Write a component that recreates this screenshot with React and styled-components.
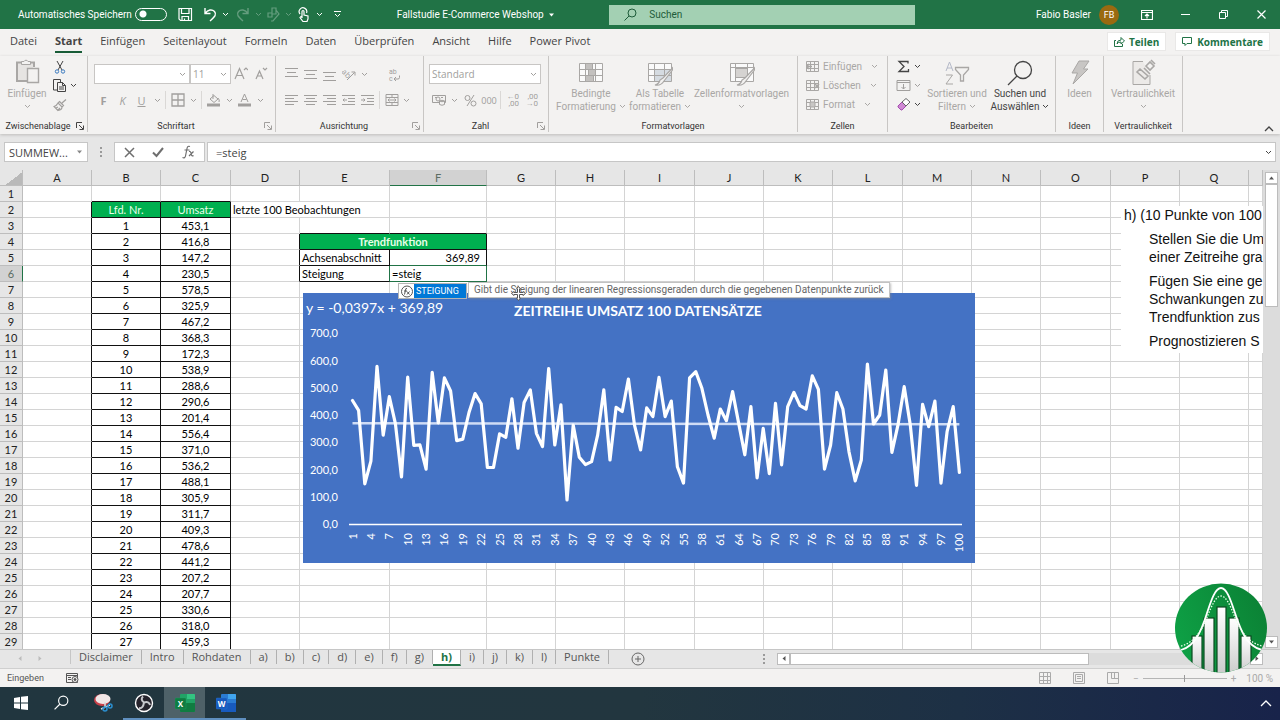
import React from 'react';
import styled, { createGlobalStyle } from 'styled-components';

const ui = `'Open Sans', 'Noto Sans', sans-serif`;
const small = `Roboto, 'Open Sans', sans-serif`;
const cellFont = `Lato, 'Open Sans', sans-serif`;

const GlobalStyle = createGlobalStyle`
  * {
    box-sizing: border-box;
  }

  body {
    margin: 0;
    font-family: ${ui};
    font-size: 11px;
    color: #444;
    background: #e6e6e6;
  }

  button, input, select {
    font: inherit;
    color: inherit;
    margin: 0;
    padding: 0;
    border: none;
    background: none;
    border-radius: 0;
    outline: none;
  }

  svg {
    display: block;
    flex: none;
  }
`;

const Window = styled.div`
  display: flex;
  flex-direction: column;
  height: 100vh;
  overflow: hidden;
`;

/* title bar */

const TitleBar = styled.header`
  display: grid;
  grid-template-columns: 31% 16.6% 23.9% 1fr;
  align-items: center;
  height: 29px;
  flex: none;
  background: #217346;
  color: #fff;
  font-family: ${small};
  font-size: 11px;
`;

const QuickAccess = styled.div`
  display: flex;
  align-items: center;
  padding-left: 18px;
`;

const AutoSave = styled.label`
  display: flex;
  align-items: center;
  gap: 3px;
  margin-right: 6px;
  font-size: 10px;
`;

const Toggle = styled.input`
  appearance: none;
  width: 32px;
  height: 13px;
  border: 1px solid #fff;
  border-radius: 7px;
  background: radial-gradient(circle at 7px 5px, #fff 3px, transparent 4px);
`;

const BarButton = styled.button`
  display: flex;
  align-items: center;
  justify-content: center;
  width: ${props => props.$width || 24}px;
  height: 24px;
  opacity: ${props => (props.$faded ? 0.3 : 1)};
`;

const DocTitle = styled.div`
  display: flex;
  align-items: center;
  gap: 4px;
  font-size: 10px;
  white-space: nowrap;
`;

const SearchBox = styled.label`
  display: flex;
  align-items: center;
  gap: 12px;
  height: 20px;
  padding-left: 15px;
  background: #a3d0b3;
  color: #1e5c3a;

  input {
    flex: 1;
    min-width: 0;
    font-size: 10px;
  }

  input::placeholder {
    color: #1e5c3a;
    opacity: 1;
  }
`;

const Account = styled.div`
  display: flex;
  align-items: center;
  justify-content: flex-end;
  font-size: 10px;
`;

const Avatar = styled.span`
  width: 20px;
  height: 20px;
  margin: 0 9px 0 8px;
  border-radius: 50%;
  background: #9a6a10;
  font-size: 9px;
  line-height: 20px;
  text-align: center;
`;

/* ribbon */

const TabRow = styled.nav`
  display: flex;
  align-items: flex-start;
  gap: 18px;
  height: 27px;
  flex: none;
  padding: 0 10px;
  background: #f3f2f1;
`;

const RibbonTab = styled.a`
  position: relative;
  line-height: 24px;
  color: #444;
  text-decoration: none;
  white-space: nowrap;
  font-weight: ${props => (props.$active ? 700 : 400)};

  &::after {
    content: '';
    position: absolute;
    left: 0;
    right: 0;
    bottom: 0;
    height: ${props => (props.$active ? 2 : 0)}px;
    background: #185c37;
  }
`;

const ShareButtons = styled.div`
  display: flex;
  gap: 9px;
  margin: 3px 0 0 auto;
`;

const ShareButton = styled.button`
  display: flex;
  align-items: center;
  gap: 4px;
  height: 19px;
  padding: 0 6px;
  background: #fff;
  border: 1px solid #e9e8e7;
  color: #217346;
  font-size: 10px;
  font-weight: 700;
`;

const Ribbon = styled.div`
  display: flex;
  height: 78px;
  flex: none;
  background: #f3f2f1;
  box-shadow: 0 1px 3px #bdbcbb;
  position: relative;
`;

const Group = styled.section`
  display: flex;
  flex-direction: column;
  flex: none;
  width: ${props => props.$width}px;
  padding-top: 1px;
  border-right: 1px solid #c8c6c4;
  margin-bottom: 2px;
`;

const GroupBody = styled.div`
  display: flex;
  flex: 1;
  padding-left: ${props => props.$pad || 0}px;
  justify-content: ${props => (props.$center ? 'center' : 'flex-start')};
`;

const GroupCaption = styled.div`
  display: flex;
  align-items: center;
  height: 12px;
  font-family: ${small};
  font-size: 9px;
  color: #333;

  span {
    flex: 1;
    text-align: center;
  }

  svg {
    margin-right: 3px;
    color: ${props => (props.$on ? '#444' : '#a19f9d')};
  }
`;

const Column = styled.div`
  display: flex;
  flex-direction: column;
`;

const TwoRows = styled.div`
  display: grid;
  grid-template-rows: 20px 20px;
  row-gap: 6px;
  align-content: start;
  padding-top: 7px;
`;

const ToolRow = styled.div`
  display: flex;
  align-items: center;
`;

const Tool = styled.button`
  display: flex;
  align-items: center;
  justify-content: center;
  width: ${props => props.$width || 19}px;
  height: 19px;
  margin-left: ${props => props.$gap || 0}px;
  color: ${props => (props.$on ? '#444' : '#a19f9d')};
`;

const LabelTool = styled.button`
  display: flex;
  align-items: center;
  gap: 3px;
  height: 19px;
  color: #a9a7a5;
  font-family: ${small};
  font-size: 10px;

  svg:last-child {
    margin-left: 6px;
  }
`;

const Separator = styled.span`
  width: 1px;
  height: 18px;
  margin: 0 2px;
  background: #dad8d6;
`;

const Combo = styled.label`
  display: flex;
  align-items: center;
  width: ${props => props.$width}px;
  height: 20px;
  padding: 0 3px 0 2px;
  background: #fff;
  border: 1px solid #c8c6c4;
  color: #a19f9d;
  font-size: 10px;

  select {
    appearance: none;
    flex: 1;
    min-width: 0;
  }
`;

const BigTool = styled.button`
  display: flex;
  flex-direction: column;
  align-items: center;
  width: ${props => props.$width}px;
  padding-top: 2px;
  color: ${props => (props.$on ? '#444' : '#a9a7a5')};
  font-family: ${small};
  font-size: 10px;
  line-height: 13px;
  white-space: nowrap;

  span {
    display: flex;
    align-items: center;
    gap: 3px;
    min-height: 13px;
  }

  > svg:last-child {
    margin-top: 4px;
  }
`;

const Collapse = styled.button`
  margin: auto 6px 0 auto;
  padding-bottom: 2px;
`;

/* formula bar */

const FormulaBar = styled.div`
  display: flex;
  align-items: center;
  height: 36px;
  flex: none;
  padding: 0 4px;
`;

const NameBox = styled.label`
  display: flex;
  align-items: center;
  width: 84px;
  height: 20px;
  padding: 0 3px 0 4px;
  background: #fff;
  border: 1px solid #c6c6c6;

  input {
    flex: 1;
    min-width: 0;
    font-size: 11px;
  }

  svg {
    color: #888;
  }
`;

const Grip = styled.span`
  width: 2px;
  height: 11px;
  margin: 0 12px;
  background: repeating-linear-gradient(#9a9a9a 0 2px, transparent 2px 4px);
`;

const FormulaButtons = styled.div`
  display: flex;
  justify-content: space-around;
  align-items: center;
  width: 91px;
  height: 20px;
  background: #fff;
  border: 1px solid #c6c6c6;
  margin-right: 2px;
  color: #6e6e6e;
`;

const FormulaField = styled.label`
  display: flex;
  align-items: center;
  flex: 1;
  height: 20px;
  padding: 0 3px 0 8px;
  background: #fff;
  border: 1px solid #c6c6c6;

  input {
    flex: 1;
    font-size: 11px;
  }
`;

/* sheet */

const SheetArea = styled.main`
  display: flex;
  flex: 1;
  min-height: 0;
`;

const Canvas = styled.div`
  position: relative;
  flex: 1;
  min-width: 0;
  overflow: hidden;
  background: #fff;
`;

const Grid = styled.table`
  table-layout: fixed;
  border-collapse: separate;
  border-spacing: 0;
  width: max-content;
  min-width: 100%;
  font-family: ${cellFont};
  font-size: 11px;
  line-height: 15px;
  color: #000;
`;

const HeadCell = styled.th`
  height: 16px;
  padding: 1px 0 0;
  font-weight: 400;
  line-height: 14px;
  color: ${props => (props.$active ? '#5c6e64' : '#222')};
  background: ${props => (props.$active ? '#d2d2d2' : '#e6e6e6')};
  border-right: 1px solid ${props => (props.$active && props.scope === 'row' ? '#217346' : '#bdbdbd')};
  border-bottom: 1px solid ${props => (props.$active && props.scope === 'col' ? '#217346' : '#bdbdbd')};
`;

const Corner = styled.td`
  height: 16px;
  padding: 0;
  background: linear-gradient(143deg, #e6e6e6 60%, #b9b9b9 60%);
  border-right: 1px solid #bdbdbd;
  border-bottom: 1px solid #bdbdbd;
`;

const Cell = styled.td`
  height: 16px;
  padding: 0 ${props => (props.$align === 'right' ? 6 : 2)}px;
  overflow: hidden;
  white-space: nowrap;
  text-align: ${props => props.$align || 'left'};
  color: ${props => (props.$head ? '#e9ffe9' : '#000')};
  font-weight: ${props => (props.$bold ? 700 : 400)};
  background: ${props => (props.$head ? '#00b050' : 'transparent')};
  border-right: 1px solid ${props => props.$right || '#d4d4d4'};
  border-bottom: 1px solid ${props => props.$bottom || '#d4d4d4'};

  input {
    display: block;
    width: 100%;
    height: 15px;
  }
`;

const Chart = styled.svg`
  position: absolute;
  left: 303px;
  top: 123px;
  font-family: ${cellFont};
  font-size: 11px;
  fill: #fff;
`;

const TaskText = styled.div`
  position: absolute;
  left: 1121px;
  right: 0;
  top: 36px;
  padding: 0 0 3px 3px;
  background: #fff;
  color: #111;
  font-family: 'Liberation Sans', Arial, sans-serif;
  font-size: 14px;
  line-height: 18px;
  white-space: nowrap;

  p {
    margin: 0 0 6px;
  }

  p + p {
    margin-left: 25px;
  }

  p:last-child {
    margin-bottom: 0;
  }
`;

const Suggestions = styled.ul`
  position: absolute;
  left: 398px;
  top: 113px;
  width: 69px;
  margin: 0;
  padding: 0;
  list-style: none;
  background: #fff;
  border: 1px solid #b5b5b5;

  li {
    display: flex;
    align-items: center;
    height: 14px;
    font-family: ${small};
    font-size: 9px;
    color: #fff;
  }

  span {
    flex: 1;
    padding-left: 2px;
    background: #0078d7;
    line-height: 14px;
  }
`;

const Tooltip = styled.div`
  position: absolute;
  left: 468px;
  top: 112px;
  padding: 0 5px;
  background: #fff;
  border: 1px solid #c2c2c2;
  box-shadow: 1px 1px 2px #8888;
  color: #666;
  font-family: ${small};
  font-size: 10px;
  line-height: 14px;
  white-space: nowrap;
`;

const MoveCursor = styled.svg`
  position: absolute;
  left: 511px;
  top: 116px;
`;

const VScroll = styled.div`
  display: flex;
  flex-direction: column;
  width: 17px;
  padding: 2px 2px 1px;
  background: #dcdcdc;
`;

const ScrollButton = styled.button`
  display: flex;
  align-items: center;
  justify-content: center;
  width: 13px;
  height: 12px;
  background: #fff;
  border: 1px solid #bcbcbc;
  color: #555;
`;

const VThumb = styled.div`
  height: 123px;
  margin-bottom: auto;
  background: #fff;
  border: 1px solid #bcbcbc;
`;

/* sheet tabs and status */

const SheetTabs = styled.div`
  display: flex;
  align-items: flex-start;
  height: 20px;
  flex: none;
  border-top: 1px solid #c6c6c6;
  border-bottom: 1px solid #cfcfcf;
`;

const TabArrows = styled.div`
  display: flex;
  gap: 12px;
  width: 71px;
  height: 14px;
  padding: 5px 0 0 16px;
  border-right: 1px solid #c6c6c6;
  color: #bcbcbc;
`;

const SheetTab = styled.a`
  height: ${props => (props.$active ? 16 : 14)}px;
  padding: 0 8px;
  line-height: 14px;
  text-decoration: none;
  color: ${props => (props.$active ? '#217346' : '#555')};
  font-weight: ${props => (props.$active ? 700 : 400)};
  background: ${props => (props.$active ? '#fff' : 'transparent')};
  border-right: 1px solid #b0b0b0;
  border-bottom: ${props => (props.$active ? '2px solid #217346' : 'none')};
`;

const AddSheet = styled.button`
  margin: 2px 0 0 22px;
  color: #666;
`;

const HScroll = styled.div`
  display: flex;
  align-items: center;
  width: 40%;
  margin: 3px 17px 0 auto;
`;

const HTrack = styled.div`
  display: flex;
  flex: 1;
  height: 12px;
  background: #dcdcdc;
`;

const HThumb = styled.div`
  width: 65%;
  height: 12px;
  background: #fff;
  border: 1px solid #bcbcbc;
`;

const StatusBar = styled.footer`
  display: flex;
  align-items: center;
  gap: 22px;
  height: 18px;
  flex: none;
  padding: 0 7px;
  background: #f3f2f1;
  font-family: ${small};
  font-size: 9px;
  color: #555;
`;

const ViewTools = styled.div`
  display: flex;
  align-items: center;
  gap: 22px;
  margin-left: auto;
  color: #aaa;
`;

const Zoom = styled.label`
  display: flex;
  align-items: center;
  gap: 4px;
  margin-left: -8px;
  font-size: 10px;

  input {
    appearance: none;
    width: 84px;
    height: 10px;
    background: linear-gradient(#b5b5b5, #b5b5b5) center / 100% 1px no-repeat;
  }

  input::-webkit-slider-thumb {
    appearance: none;
    width: 1px;
    height: 7px;
    background: #999;
  }

  output {
    margin-left: 6px;
  }
`;

const Taskbar = styled.div`
  display: flex;
  height: 33px;
  flex: none;
  background: linear-gradient(90deg, #21363f 0%, #22363f 50%, #1d3045 75%, #18234a 100%);
`;

const TaskButton = styled.button`
  display: flex;
  align-items: center;
  justify-content: center;
  width: 41px;
  background: ${props => (props.$active ? '#4e6168' : 'transparent')};
  border-bottom: 2px solid ${props => (props.$open ? '#5f8fbf' : 'transparent')};
  color: #fff;
`;

const TrayButton = styled.button`
  margin: 0 8px 0 auto;
  color: #fff;
`;

const Logo = styled.svg`
  position: absolute;
  right: 11px;
  bottom: 47px;
`;

/* icons */

function Icon({ size = 16, w, h, children, ...rest }) {
  return (
    <svg
      width={w || size}
      height={h || size}
      viewBox={`0 0 ${w || size} ${h || size}`}
      fill="none"
      stroke="currentColor"
      strokeWidth="1"
      aria-hidden="true"
      {...rest}
    >
      {children}
    </svg>
  );
}

const Chevron = () => (
  <Icon w={7} h={5}><path d="M1 1l2.500 2.500L6 1" /></Icon>
);

const Launcher = () => (
  <Icon size={8}><path d="M.5 6V.5H6M3 3l4 4M7.500 3.500v4h-4" /></Icon>
);

const SaveIcon = () => (
  <Icon size={15}>
    <path d="M1 1.500h12.500v12H2.500L1 12zM3.500 1.500v5H11v-5M4 13.500v-4h6.500v4M6.500 11.500v2" strokeWidth="1.200" />
  </Icon>
);

const UndoIcon = () => (
  <Icon size={15}><path d="M2 1v5.500h5.500M2 6.500C5 2.500 9 2 11.500 4.500C14 7.500 12 9.500 7 14" strokeWidth="1.400" /></Icon>
);

const RedoIcon = () => (
  <Icon size={15}><path d="M13 1v5.500H7.500M13 6.500C10 2.500 6 2 3.500 4.500C1 7.500 3 9.500 8 14" strokeWidth="1.400" /></Icon>
);

const ShapesIcon = () => (
  <Icon size={15}><path d="M6 1h4v6H6zM10 3l3 4-6 7H5M2 6h4v4H2z" strokeWidth="1.200" /></Icon>
);

const TouchIcon = () => (
  <Icon size={15}>
    <path d="M6 11V4.500a1 1 0 0 1 2 0V8l4 1v3l-1 2.500H7L4 10.500l1-1 1 1M4 7A3.800 3.800 0 1 1 10.500 6" strokeWidth="1.200" />
  </Icon>
);

const SearchIcon = ({ size = 13 }) => (
  <svg width={size} height={size} viewBox="0 0 13 13" fill="none" stroke="currentColor" aria-hidden="true">
    <circle cx="8" cy="5" r="4" />
    <path d="M5 8l-4.500 4.500" />
  </svg>
);

const PasteIcon = () => (
  <Icon w={26} h={28}>
    <path d="M4 4h15v17H4z" fill="#e6e4e2" stroke="none" />
    <path d="M8 3.500H3v18.500h10M16 3.500h4V8" strokeWidth="2" />
    <path d="M7.500 5.500v-3H10a2.200 2.200 0 0 1 4 0h2.500v3z" fill="#f3f2f1" />
    <path d="M13.500 9.500h11v14h-11z" fill="#f3f2f1" strokeWidth="1.400" />
  </Icon>
);

const CutIcon = () => (
  <Icon size={14}>
    <path d="M4 1l5 9M10 1L5 10" />
    <circle cx="4" cy="11.500" r="1.700" stroke="#3a7abf" />
    <circle cx="10" cy="11.500" r="1.700" stroke="#3a7abf" />
  </Icon>
);

const CopyIcon = () => (
  <Icon size={15}>
    <path d="M5 12H1.500V1.500h7V4M5.500 4.500h5l3 3v6h-8zM10.500 4.500v3h3M7 9h5M7 11h5" />
  </Icon>
);

const BrushIcon = () => (
  <Icon size={14}>
    <path d="M13 1.500L9 5M6.500 3.500l4 4-1.500 1.500-4-4zM5 5C4 7 3 8 1 8.500l4 4C8 12 9 10 9 9M3 10l2-1M5 12l2-2" strokeWidth="1.200" />
  </Icon>
);

const BordersIcon = () => (
  <Icon size={14}><path d="M1 1h12v12H1zM7 1v12M1 7h12" strokeWidth="1.300" /></Icon>
);

const FillIcon = () => (
  <Icon size={14}>
    <path d="M6 1v5M3 6l4-3.500L11 6l-4 3.500zM11 5q2 2 1 4" />
    <path d="M0 10.500h13v3H0z" fill="currentColor" stroke="none" />
  </Icon>
);

const FontColorIcon = () => (
  <Icon size={14}>
    <path d="M3 9L6.500 1 10 9M4.500 6.500h4" />
    <path d="M0 10.500h13v3H0z" fill="currentColor" stroke="none" />
  </Icon>
);

// each entry of `lines` is the start and end of one stroke
function LinesIcon({ lines, step = 3, top = 1 }) {
  return (
    <Icon w={13} h={13}>
      <path d={lines.map(([a, b], i) => `M${a} ${top + i * step + 0.5}H${b}`).join('')} />
    </Icon>
  );
}

const IndentIcon = ({ flip }) => (
  <Icon size={13}>
    <path d="M0 1.500h13M6 4.500h7M6 7.500h7M0 10.500h13" />
    <path d={flip ? 'M0 6h4M2.500 4.500L4 6 2.500 7.500' : 'M5 6H1M2.500 4.500L1 6l1.500 1.500'} />
  </Icon>
);

const OrientationIcon = () => (
  <Icon size={14}>
    <path d="M5 13L12.500 5.500M9.500 5h3.500v3.500" />
    <text x="0" y="9" fontSize="8" stroke="none" fill="currentColor" transform="rotate(45 4 6)">ab</text>
  </Icon>
);

const WrapIcon = () => (
  <Icon size={15} fontFamily="Roboto, sans-serif" fontSize="7">
    <text x="2" y="7" stroke="none" fill="currentColor">ab</text>
    <text x="2" y="14" stroke="none" fill="currentColor">c</text>
    <path d="M12.500 8.500v2q0 1.500-1.500 1.500H7.500M9 10l-2 2 2 2" />
  </Icon>
);

const MergeIcon = () => (
  <Icon size={14}>
    <path d="M1 1.500h12v11H1zM1 4.500h12M1 9.500h12M7 1v3M7 10v3M3 7h8M4.500 5.500L3 7l1.500 1.500M9.500 5.500L11 7 9.500 8.500" />
  </Icon>
);

const CurrencyIcon = () => (
  <Icon size={14}>
    <path d="M.5 2.500h13v7H.5zM3 4.500h2M9 4.500h2" />
    <circle cx="6" cy="6" r="2" />
    <path d="M7.500 8v3.500q2.500 1.500 5 0V8q-2.500-1.500-5 0q2.500 1.500 5 0" fill="#f3f2f1" />
  </Icon>
);

const DecimalIcon = ({ top, bottom }) => (
  <Icon w={15} h={14} stroke="none" fill="currentColor" fontSize="8" fontFamily="Roboto, sans-serif">
    <text x="14" y="6" textAnchor="end">{top}</text>
    <text x="14" y="13" textAnchor="end">{bottom}</text>
  </Icon>
);

const TableBrushIcon = ({ variant }) => (
  <Icon w={26} h={28}>
    <path d="M1.500 4.500h23v18h-23z" fill="#fafafa" />
    {variant === 'cond' && <path d="M7.500 4.500h7v6h-7zM7.500 16.500h8v6h-8zM10.500 10.500h7v6h-7z" fill="#c3c1bf" />}
    {variant === 'table' && <path d="M8 10h16v12H8z" fill="#d5dbe1" stroke="none" />}
    {variant === 'style' && <path d="M6.500 9.500h12v9h-12z" fill="#d5d3d1" />}
    {variant === 'style'
      ? <path d="M6.500 4v18M1 8.500h23M18.500 4v12" />
      : <path d="M7.500 4v18M17.500 4v18M1 10.500h23M1 16.500h23" />}
    {variant !== 'cond' && (
      <path d="M25.500 9L16 19l-3 2q-1 4-5 5q6 1 9-4l8.500-11z" fill="#f3f2f1" strokeWidth="1.200" />
    )}
  </Icon>
);

const CellsIcon = ({ mode }) => (
  <Icon w={14} h={13}>
    <path d="M.5 1.500h12v10H.5zM.5 4.500h12M.5 8.500h12M4.500 1v11M8.500 1v11" />
    {mode === 'insert' && <path d="M6 6.500H0M3 4L.5 6.500 3 9" strokeWidth="1.500" />}
    {mode === 'delete' && <path d="M9 5l4 4M13 5L9 9" strokeWidth="1.500" />}
    {mode === 'format' && <path d="M4 4h5v5H4z" fill="#c9c7c5" />}
  </Icon>
);

const SumIcon = () => (
  <Icon size={13}><path d="M11 3.500V1.500H2L7 6.500 2 11.500h9.500V9" strokeWidth="1.300" /></Icon>
);

const FillDownIcon = () => (
  <Icon w={15} h={13}><path d="M1 1.500h13v10H1zM1 3.500h13M7.500 5v5M5.500 8l2 2 2-2" /></Icon>
);

const EraserIcon = () => (
  <Icon w={14} h={13}>
    <path d="M1 8l4-4 4 4-4 4H4L1 9z" fill="#cf8ad4" stroke="#a54ab0" />
    <path d="M5 4l4-3.500L13 4 9 8z" fill="#fff" stroke="#666" />
  </Icon>
);

const SortIcon = () => (
  <Icon w={26} h={28}>
    <path d="M2 12L5.500 3 9 12M3 9h5" stroke="#b4b9c8" />
    <path d="M2 16h6.500L2 25h7" />
    <path d="M11.500 8.500h13v2L19.500 16v6h-3v-6l-5-5.500z" strokeWidth="1.300" />
  </Icon>
);

const FindIcon = () => (
  <Icon w={26} h={28}><circle cx="16" cy="11" r="8.500" strokeWidth="1.300" /><path d="M10 17L1 26" strokeWidth="1.300" /></Icon>
);

const IdeasIcon = () => (
  <Icon w={20} h={28}><path d="M9 2h10l-5.500 8H18L3 25l4.500-11H2z" fill="#c8c6c4" /></Icon>
);

const SensitivityIcon = () => (
  <Icon w={26} h={28}>
    <path d="M13 2.500H3v23h17V16" fill="#eceae8" />
    <path d="M7 13l3-3 8 7-3 3zM16 7l4-4 4 4-4 4zM14 9l6 6M21 1l4 4" strokeWidth="1.600" />
  </Icon>
);

const ShareIcon = () => (
  <Icon size={11}><path d="M2 4.500H.5v6h8V8M3 8q0-4 4-4V1.500L10.500 5 7 8V6Q4 6 3 8z" /></Icon>
);

const CommentIcon = () => (
  <Icon size={11}><path d="M.5 1.500h9v6H5L3 9.500v-2H.5z" /></Icon>
);

const Arrow = ({ dir = 'down' }) => {
  const d = {
    down: 'M1 2.500h5L3.500 5.500z',
    up: 'M1 5.500h5L3.500 2.500z',
    left: 'M5.500 1v5L2.500 3.500z',
    right: 'M2.500 1v5l3-2.500z',
  }[dir];
  return <Icon size={8} fill="currentColor" stroke="none"><path d={d} /></Icon>;
};

/* data */

const tabs = ['Datei', 'Start', 'Einfügen', 'Seitenlayout', 'Formeln', 'Daten', 'Überprüfen', 'Ansicht', 'Hilfe', 'Power Pivot'];
const sheets = ['Disclaimer', 'Intro', 'Rohdaten', 'a)', 'b)', 'c)', 'd)', 'e)', 'f)', 'g)', 'h)', 'i)', 'j)', 'k)', 'l)', 'Punkte'];

const columns = [
  ['A', 69], ['B', 69], ['C', 70], ['D', 69], ['E', 90], ['F', 97], ['G', 69], ['H', 69], ['I', 70],
  ['J', 69], ['K', 69], ['L', 70], ['M', 69], ['N', 69], ['O', 70], ['P', 69], ['Q', 69], ['', 14],
];

const sales = [
  453.1, 416.8, 147.2, 230.5, 578.5, 325.9, 467.2, 368.3, 172.3, 538.9,
  288.6, 290.6, 201.4, 556.4, 371.0, 536.2, 488.1, 305.9, 311.7, 409.3,
  478.6, 441.2, 207.2, 207.7, 330.6, 318.0, 459.3, 278, 446, 492,
  333, 284, 570, 290, 437, 88, 363, 245, 218, 229,
  327, 492, 235, 428, 413, 532, 363, 272, 426, 394,
  538, 394, 451, 210, 150, 536, 559, 498, 400, 315,
  422, 379, 486, 369, 254, 431, 169, 351, 185, 443,
  217, 431, 483, 434, 422, 544, 494, 201, 290, 482,
  422, 265, 158, 235, 587, 367, 400, 565, 263, 366,
  504, 363, 142, 439, 357, 451, 150, 339, 431, 189,
];

const german = (n, digits = 1) => n.toFixed(digits).replace('.', ',');

const line = '#111';
const green = '#217346';

function rowCells(row) {
  const cells = [];
  for (let i = 0; i < columns.length; i++) {
    const col = columns[i][0];
    const cell = { key: col };
    if (col === 'A' && row >= 2) cell.$right = line;
    if (col === 'B' || col === 'C') {
      cell.$align = 'center';
      cell.$bottom = line;
      if (row >= 2) cell.$right = line;
      if (row === 2) {
        cell.$head = true;
        cell.text = col === 'B' ? 'Lfd. Nr.' : 'Umsatz';
      }
      if (row > 2) cell.text = col === 'B' ? row - 2 : german(sales[row - 3]);
    }
    if (col === 'D' && row === 2) {
      cell.text = 'letzte 100 Beobachtungen';
      cell.colSpan = 2;
      i++;
    }
    if (col === 'D' && row >= 4 && row <= 6) cell.$right = line;
    if ((col === 'E' || col === 'F') && row === 3) cell.$bottom = line;
    if (col === 'E' && row === 4) {
      Object.assign(cell, { text: 'Trendfunktion', colSpan: 2, $head: true, $bold: true, $align: 'center', $right: line, $bottom: line });
      i++;
    }
    if (col === 'E' && (row === 5 || row === 6)) {
      Object.assign(cell, { text: row === 5 ? 'Achsenabschnitt' : 'Steigung', $right: row === 5 ? line : green, $bottom: line });
    }
    if (col === 'F' && row === 5) Object.assign(cell, { text: '369,89', $align: 'right', $right: line, $bottom: green });
    if (col === 'F' && row === 6) {
      Object.assign(cell, {
        text: <input aria-label="Zelle F6" defaultValue="=steig" />,
        $right: green,
        $bottom: green,
      });
    }
    cells.push(cell);
  }
  return cells;
}

function Spreadsheet() {
  const rows = Array.from({ length: 29 }, (_, i) => i + 1);
  return (
    <Grid>
      <colgroup>
        <col width="23" />
        {columns.map(([name, width]) => <col key={name} width={width} />)}
      </colgroup>
      <thead>
        <tr>
          <Corner />
          {columns.map(([name]) => (
            <HeadCell key={name} scope="col" $active={name === 'F'}>{name}</HeadCell>
          ))}
        </tr>
      </thead>
      <tbody>
        {rows.map(row => (
          <tr key={row}>
            <HeadCell scope="row" $active={row === 6}>{row}</HeadCell>
            {rowCells(row).map(({ key, text, ...cell }) => <Cell key={key} {...cell}>{text}</Cell>)}
          </tr>
        ))}
      </tbody>
    </Grid>
  );
}

function TrendChart() {
  const x = i => 49.5 + i * 6.13;
  const y = v => 231 - v * 0.2725;
  const points = sales.map((v, i) => `${x(i).toFixed(1)},${y(v).toFixed(1)}`).join(' ');
  return (
    <Chart width="672" height="270" viewBox="0 0 672 270" role="img" aria-label="Zeitreihe Umsatz">
      <rect width="672" height="270" fill="#4472c4" />
      <text x="3" y="20" fontSize="14">y = -0,0397x + 369,89</text>
      <text x="335" y="23" fontSize="14" fontWeight="700" textAnchor="middle">ZEITREIHE UMSATZ 100 DATENSÄTZE</text>
      {[0, 100, 200, 300, 400, 500, 600, 700].map(v => (
        <text key={v} x="35" y={y(v) + 4} textAnchor="end">{german(v)}</text>
      ))}
      <path d="M46 231.500H659" stroke="#fff" strokeWidth="1.500" />
      <path d={`M${x(0)} ${y(369.9)}L${x(99)} ${y(365.9)}`} stroke="#cfdcf5" strokeWidth="2.500" />
      <polyline points={points} fill="none" stroke="#fff" strokeWidth="3.200" strokeLinejoin="round" strokeLinecap="round" />
      {Array.from({ length: 34 }, (_, i) => i * 3).map(i => (
        <text key={i} textAnchor="end" transform={`translate(${x(i) + 4} 240) rotate(-90)`}>{i + 1}</text>
      ))}
    </Chart>
  );
}

function RibbonGroup({ width, caption, launcher, pad, center, children }) {
  return (
    <Group $width={width}>
      <GroupBody $pad={pad} $center={center}>{children}</GroupBody>
      <GroupCaption $on={launcher === 'on'}>
        <span>{caption}</span>
        {launcher && <Launcher />}
      </GroupCaption>
    </Group>
  );
}

const full = [0, 13];

function RibbonGroups() {
  return (
    <Ribbon>
      <RibbonGroup width={88} caption="Zwischenablage" launcher="on" pad={4}>
        <BigTool $width={46}>
          <PasteIcon />
          <span>Einfügen</span>
          <Chevron />
        </BigTool>
        <Column>
          <Tool $on aria-label="Ausschneiden"><CutIcon /></Tool>
          <ToolRow>
            <Tool $on aria-label="Kopieren"><CopyIcon /></Tool>
            <Tool $on $width={9} aria-label="Kopieroptionen"><Chevron /></Tool>
          </ToolRow>
          <Tool aria-label="Format übertragen"><BrushIcon /></Tool>
        </Column>
      </RibbonGroup>

      <RibbonGroup width={188} caption="Schriftart" launcher="off" pad={6}>
        <TwoRows>
          <ToolRow>
            <Combo $width={96}><select aria-label="Schriftart" /><Chevron /></Combo>
            <Combo $width={41}>
              <select aria-label="Schriftgrad"><option>11</option></select>
              <Chevron />
            </Combo>
            <Tool $width={20} aria-label="Schrift vergrößern">
              <Icon size={14}><path d="M1 12L5.500 1.500 10 12M2.500 8.500h6M10 3l2-2 2 2" strokeWidth="1.200" /></Icon>
            </Tool>
            <Tool $width={20} aria-label="Schrift verkleinern">
              <Icon size={14}><path d="M2 12L5.500 4 9 12M3 9h5M9 1l2 2 2-2" strokeWidth="1.200" /></Icon>
            </Tool>
          </ToolRow>
          <ToolRow>
            <Tool><b>F</b></Tool>
            <Tool><i>K</i></Tool>
            <Tool><u>U</u></Tool>
            <Tool $width={12} aria-label="Unterstreichen"><Chevron /></Tool>
            <Separator />
            <Tool aria-label="Rahmen"><BordersIcon /></Tool>
            <Tool $width={12} aria-label="Rahmenoptionen"><Chevron /></Tool>
            <Separator />
            <Tool aria-label="Füllfarbe"><FillIcon /></Tool>
            <Tool $width={12} aria-label="Füllfarben"><Chevron /></Tool>
            <Tool aria-label="Schriftfarbe"><FontColorIcon /></Tool>
            <Tool $width={12} aria-label="Schriftfarben"><Chevron /></Tool>
          </ToolRow>
        </TwoRows>
      </RibbonGroup>

      <RibbonGroup width={148} caption="Ausrichtung" launcher="off" pad={6}>
        <TwoRows>
          <ToolRow>
            <Tool aria-label="Oben"><LinesIcon lines={[full, [2, 11], full]} step={4} top={0} /></Tool>
            <Tool aria-label="Mitte"><LinesIcon lines={[full, [2, 11], full]} step={4} top={2} /></Tool>
            <Tool aria-label="Unten"><LinesIcon lines={[full, [2, 11], full]} step={4} top={4} /></Tool>
            <Tool $width={20} aria-label="Ausrichtung"><OrientationIcon /></Tool>
            <Tool $width={10} aria-label="Ausrichtungen"><Chevron /></Tool>
            <Tool $gap={16} aria-label="Textumbruch"><WrapIcon /></Tool>
          </ToolRow>
          <ToolRow>
            <Tool aria-label="Linksbündig"><LinesIcon lines={[full, [0, 9], full, [0, 9]]} /></Tool>
            <Tool aria-label="Zentriert"><LinesIcon lines={[full, [2, 11], full, [2, 11]]} /></Tool>
            <Tool aria-label="Rechtsbündig"><LinesIcon lines={[full, [4, 13], full, [4, 13]]} /></Tool>
            <Tool aria-label="Einzug verkleinern"><IndentIcon /></Tool>
            <Tool aria-label="Einzug vergrößern"><IndentIcon flip /></Tool>
            <Separator />
            <Tool aria-label="Zellen verbinden"><MergeIcon /></Tool>
            <Tool $width={10} aria-label="Verbindungsoptionen"><Chevron /></Tool>
          </ToolRow>
        </TwoRows>
      </RibbonGroup>

      <RibbonGroup width={125} caption="Zahl" launcher="off" pad={5}>
        <TwoRows>
          <Combo $width={112}>
            <select aria-label="Zahlenformat"><option>Standard</option></select>
            <Chevron />
          </Combo>
          <ToolRow>
            <Tool aria-label="Währung"><CurrencyIcon /></Tool>
            <Tool $width={12} aria-label="Währungen"><Chevron /></Tool>
            <Tool $width={20} aria-label="Prozent">
              <Icon size={13}><circle cx="3.500" cy="4" r="2.500" /><circle cx="9.500" cy="9.500" r="2.500" /><path d="M10 1L3 12" /></Icon>
            </Tool>
            <Tool $width={18}><small>000</small></Tool>
            <Separator />
            <Tool aria-label="Dezimalstelle hinzufügen"><DecimalIcon top="←0" bottom=",00" /></Tool>
            <Tool aria-label="Dezimalstelle entfernen"><DecimalIcon top=",00" bottom="→0" /></Tool>
          </ToolRow>
        </TwoRows>
      </RibbonGroup>

      <RibbonGroup width={249} caption="Formatvorlagen" pad={6}>
        <BigTool $width={72}>
          <TableBrushIcon variant="cond" />
          <span>Bedingte</span>
          <span>Formatierung <Chevron /></span>
        </BigTool>
        <BigTool $width={66}>
          <TableBrushIcon variant="table" />
          <span>Als Tabelle</span>
          <span>formatieren <Chevron /></span>
        </BigTool>
        <BigTool $width={97}>
          <TableBrushIcon variant="style" />
          <span>Zellenformatvorlagen</span>
          <Chevron />
        </BigTool>
      </RibbonGroup>

      <RibbonGroup width={90} caption="Zellen" pad={8}>
        <Column>
          <LabelTool><CellsIcon mode="insert" />Einfügen<Chevron /></LabelTool>
          <LabelTool><CellsIcon mode="delete" />Löschen<Chevron /></LabelTool>
          <LabelTool><CellsIcon mode="format" />Format<Chevron /></LabelTool>
        </Column>
      </RibbonGroup>

      <RibbonGroup width={168} caption="Bearbeiten" pad={6}>
        <Column>
          <ToolRow>
            <Tool $on aria-label="Summe"><SumIcon /></Tool>
            <Tool $on $width={9} aria-label="Summenoptionen"><Chevron /></Tool>
          </ToolRow>
          <ToolRow>
            <Tool aria-label="Ausfüllen"><FillDownIcon /></Tool>
            <Tool $width={9} aria-label="Fülloptionen"><Chevron /></Tool>
          </ToolRow>
          <ToolRow>
            <Tool $on aria-label="Löschen"><EraserIcon /></Tool>
            <Tool $on $width={9} aria-label="Löschoptionen"><Chevron /></Tool>
          </ToolRow>
        </Column>
        <BigTool $width={70}>
          <SortIcon />
          <span>Sortieren und</span>
          <span>Filtern <Chevron /></span>
        </BigTool>
        <BigTool $on $width={56}>
          <FindIcon />
          <span>Suchen und</span>
          <span>Auswählen <Chevron /></span>
        </BigTool>
      </RibbonGroup>

      <RibbonGroup width={48} caption="Ideen" center>
        <BigTool $width={46}>
          <IdeasIcon />
          <span>Ideen</span>
        </BigTool>
      </RibbonGroup>

      <RibbonGroup width={79} caption="Vertraulichkeit" center>
        <BigTool $width={78}>
          <SensitivityIcon />
          <span>Vertraulichkeit</span>
          <Chevron />
        </BigTool>
      </RibbonGroup>

      <Collapse aria-label="Menüband reduzieren">
        <Icon w={10} h={6}><path d="M1 5l4-4 4 4" strokeWidth="1.300" /></Icon>
      </Collapse>
    </Ribbon>
  );
}

function CurveLogo() {
  return (
    <Logo width="94" height="90" viewBox="0 0 94 90" aria-hidden="true">
      <defs>
        <linearGradient id="disc" x1="0" x2="1" y1="0.6" y2="0.2">
          <stop offset="0" stopColor="#0ea045" />
          <stop offset="1" stopColor="#0b8034" />
        </linearGradient>
        <linearGradient id="bar" x1="0" x2="0" y1="0" y2="1">
          <stop offset="0" stopColor="#fff" />
          <stop offset="1" stopColor="#c8c8c8" />
        </linearGradient>
        <clipPath id="round"><ellipse cx="46" cy="45" rx="46" ry="44.500" /></clipPath>
      </defs>
      <g clipPath="url(#round)">
        <rect width="94" height="90" fill="url(#disc)" />
        <g fill="url(#bar)" stroke="#0a4a20" strokeWidth="1.200">
          <rect x="17" y="53" width="10" height="40" />
          <rect x="29" y="35" width="10" height="60" />
          <rect x="42" y="24" width="9" height="70" />
          <rect x="54" y="35" width="10" height="60" />
          <rect x="66" y="53" width="10" height="40" />
        </g>
        <path d="M6 67C22 63 28 42 32 30S40 5 46 5S56 18 60 30S70 63 87 67" fill="none" stroke="#fff" strokeWidth="1.800" />
        <path d="M6 63C22 59 29 42 33 32S41 13 46 13S55 22 59 32S70 59 87 63" fill="none" stroke="#e8ffe8" strokeWidth="1.300" strokeDasharray="1.500 1.500" />
      </g>
    </Logo>
  );
}

function OfficeIcon({ letter, dark, mid, light }) {
  return (
    <svg width="20" height="20" viewBox="0 0 20 20" aria-hidden="true">
      <rect x="5" y="1" width="15" height="18" rx="1" fill={mid} />
      <path d="M12 1h7q1 0 1 1v4h-8z" fill={light} />
      <path d="M5 10h15v8q0 1-1 1H6q-1 0-1-1z" fill={dark} />
      <rect x="0" y="5" width="11" height="11" rx="1" fill={dark} stroke={mid} strokeWidth=".4" />
      <text x="5.500" y="13.500" fontSize="8" fontWeight="700" textAnchor="middle" fill="#fff">{letter}</text>
    </svg>
  );
}

export default function App() {
  return (
    <Window>
      <GlobalStyle />
      <TitleBar>
        <QuickAccess>
          <AutoSave>
            Automatisches Speichern
            <Toggle type="checkbox" />
          </AutoSave>
          <BarButton $width={26} aria-label="Speichern"><SaveIcon /></BarButton>
          <BarButton $width={24} aria-label="Rückgängig"><UndoIcon /></BarButton>
          <BarButton $width={6} aria-label="Rückgängig-Liste"><Chevron /></BarButton>
          <BarButton $width={28} $faded aria-label="Wiederholen"><RedoIcon /></BarButton>
          <BarButton $width={4} $faded aria-label="Wiederholen-Liste"><Chevron /></BarButton>
          <BarButton $width={26} $faded aria-label="Formen"><ShapesIcon /></BarButton>
          <BarButton $width={4} $faded aria-label="Formenliste"><Chevron /></BarButton>
          <BarButton $width={26} aria-label="Fingereingabe"><TouchIcon /></BarButton>
          <BarButton $width={6} aria-label="Eingabemodus"><Chevron /></BarButton>
          <BarButton $width={30} aria-label="Symbolleiste anpassen">
            <Icon w={7} h={7}><path d="M0 .5h7M1 3l2.500 2.500L6 3" /></Icon>
          </BarButton>
        </QuickAccess>
        <DocTitle>
          Fallstudie E-Commerce Webshop
          <Arrow />
        </DocTitle>
        <SearchBox>
          <SearchIcon />
          <input type="search" placeholder="Suchen" aria-label="Suchen" />
        </SearchBox>
        <Account>
          Fabio Basler
          <Avatar>FB</Avatar>
          <BarButton $width={38} aria-label="Menübandoptionen">
            <Icon w={12} h={10}><path d="M.5.5h11v9H.5zM.5 2.500h11M6 8.500v-4M4 6l2-2 2 2" strokeWidth="1.200" /></Icon>
          </BarButton>
          <BarButton $width={38} aria-label="Minimieren"><Icon w={9} h={5}><path d="M0 2.500h9" /></Icon></BarButton>
          <BarButton $width={38} aria-label="Wiederherstellen">
            <Icon size={9}><path d="M.5 2.500h6v6h-6zM2.500 2.500v-2h6v6h-2" /></Icon>
          </BarButton>
          <BarButton $width={38} aria-label="Schließen"><Icon size={9}><path d="M.5.5l8 8M8.500.5l-8 8" strokeWidth="1.200" /></Icon></BarButton>
        </Account>
      </TitleBar>

      <TabRow>
        {tabs.map(tab => <RibbonTab key={tab} href="#" $active={tab === 'Start'}>{tab}</RibbonTab>)}
        <ShareButtons>
          <ShareButton><ShareIcon />Teilen</ShareButton>
          <ShareButton><CommentIcon />Kommentare</ShareButton>
        </ShareButtons>
      </TabRow>
      <RibbonGroups />

      <FormulaBar>
        <NameBox>
          <input aria-label="Namenfeld" defaultValue="SUMMEW..." />
          <Arrow />
        </NameBox>
        <Grip />
        <FormulaButtons>
          <button aria-label="Abbrechen"><Icon size={11}><path d="M1 1l9 9M10 1l-9 9" strokeWidth="1.500" /></Icon></button>
          <button aria-label="Eingeben"><Icon size={12}><path d="M1 6.500l3.500 3.500L11 2" strokeWidth="2" /></Icon></button>
          <button aria-label="Funktion einfügen">
            <Icon w={13} h={14}>
              <path d="M8 1.500q-2.500-1-3 2L3.500 11q-.5 2.500-3 1.500M2.500 5h5M7 6.500q1.500-.5 2 1.500l.5 2q.5 1.500 2 .5M11.500 6.500L7 11" strokeWidth="1.200" />
            </Icon>
          </button>
        </FormulaButtons>
        <FormulaField>
          <input aria-label="Bearbeitungsleiste" defaultValue="=steig" />
          <Chevron />
        </FormulaField>
      </FormulaBar>

      <SheetArea>
        <Canvas>
          <Spreadsheet />
          <TrendChart />
          <TaskText>
            <p>h) (10 Punkte von 100</p>
            <p>Stellen Sie die Um<br />einer Zeitreihe gra</p>
            <p>Fügen Sie eine ge<br />Schwankungen zu<br />Trendfunktion zus</p>
            <p>Prognostizieren S</p>
          </TaskText>
          <Suggestions>
            <li>
              <Icon w={15} h={13} color="#555">
                <circle cx="8" cy="6.500" r="5.500" />
                <path d="M8 3.500q-1.500-.5-1.500 1.500l-1 4.500M5 6h3M8 6.500l2.500 3M10.500 6.500L8 9.500" />
              </Icon>
              <span>STEIGUNG</span>
            </li>
          </Suggestions>
          <Tooltip>Gibt die Steigung der linearen Regressionsgeraden durch die gegebenen Datenpunkte zurück</Tooltip>
          <MoveCursor width="15" height="15" viewBox="0 0 15 15" fill="#fff" stroke="#555">
            <path d="M7.500.5l2 2.500h-1v3.500H12v-1l2.500 2-2.500 2v-1H8.500V12h1l-2 2.500-2-2.500h1V8.500H3v1L.5 7.500 3 5.500v1h3.500V3h-1z" />
          </MoveCursor>
        </Canvas>
        <VScroll>
          <ScrollButton aria-label="Nach oben"><Arrow dir="up" /></ScrollButton>
          <VThumb />
          <ScrollButton aria-label="Nach unten"><Arrow /></ScrollButton>
        </VScroll>
      </SheetArea>

      <SheetTabs>
        <TabArrows><Arrow dir="left" /><Arrow dir="right" /></TabArrows>
        {sheets.map(name => (
          <SheetTab key={name} href="#" $active={name === 'h)'}>{name}</SheetTab>
        ))}
        <AddSheet aria-label="Neues Blatt">
          <Icon size={14}><circle cx="7" cy="7" r="6" /><path d="M7 4v6M4 7h6" /></Icon>
        </AddSheet>
        <HScroll>
          <Grip />
          <ScrollButton aria-label="Nach links"><Arrow dir="left" /></ScrollButton>
          <HTrack><HThumb /></HTrack>
          <ScrollButton aria-label="Nach rechts"><Arrow dir="right" /></ScrollButton>
        </HScroll>
      </SheetTabs>

      <StatusBar>
        Eingeben
        <Icon w={13} h={12}>
          <path d="M.5 1.500h11v9H.5zM.5 3.500h11M2 5.500h3M2 7.500h3" />
          <circle cx="9" cy="7.500" r="3" fill="#f3f2f1" />
          <circle cx="9" cy="7.500" r="1" fill="currentColor" />
        </Icon>
        <ViewTools>
          <Icon w={12} h={12}><path d="M.5.5h11v11H.5zM.5 4.500h11M.5 8.500h11M4.500.5v11M8.500.5v11" /></Icon>
          <Icon w={12} h={12}><path d="M.5.5h11v11H.5zM2.500 2.500h7v7h-7zM4 4.500h4M4 6.500h4" /></Icon>
          <Icon w={12} h={12}><path d="M.5.5h11v11H.5zM4.500.5v6h7M7.500.5v6" /></Icon>
          <Zoom>
            <span>−</span>
            <input type="range" min="0" max="200" defaultValue="100" aria-label="Zoom" />
            <span>+</span>
            <output>100 %</output>
          </Zoom>
        </ViewTools>
      </StatusBar>

      <Taskbar>
        <TaskButton aria-label="Start">
          <Icon size={14} fill="currentColor" stroke="none">
            <path d="M0 2l6-1v5.500H0zM7 .8L14 0v6.500H7zM0 7.500h6V13l-6-1zM7 7.500h7V14l-7-.8z" />
          </Icon>
        </TaskButton>
        <TaskButton aria-label="Suche"><SearchIcon size={15} /></TaskButton>
        <TaskButton aria-label="Snipping Tool">
          <Icon size={20} stroke="none">
            <ellipse cx="9" cy="7" rx="8" ry="6" fill="#c9404a" />
            <ellipse cx="10" cy="6" rx="7.500" ry="5" fill="#f0e6e6" />
            <path d="M12 9v6M8 16l9-4" stroke="#ddd" strokeWidth="1.500" />
            <circle cx="12" cy="16" r="2" stroke="#2a8fd0" strokeWidth="1.500" />
            <circle cx="17" cy="13" r="2" stroke="#2a8fd0" strokeWidth="1.500" />
          </Icon>
        </TaskButton>
        <TaskButton $open aria-label="OBS Studio">
          <Icon size={20}>
            <circle cx="10" cy="10" r="8.500" fill="#26232c" strokeWidth="1.400" />
            <path d="M9 3.500q-3 3 1 6M16 12q-1-4-6-2.500M5 15q4 1 5-5.500" strokeWidth="2" stroke="#c8c8cc" />
          </Icon>
        </TaskButton>
        <TaskButton $open $active aria-label="Excel"><OfficeIcon letter="X" dark="#107c41" mid="#21a366" light="#33c481" /></TaskButton>
        <TaskButton $open aria-label="Word"><OfficeIcon letter="W" dark="#185abd" mid="#2b7cd3" light="#41a5ee" /></TaskButton>
        <TrayButton aria-label="Ausgeblendete Symbole">
          <Icon w={12} h={7}><path d="M1 6l5-5 5 5" strokeWidth="1.300" /></Icon>
        </TrayButton>
      </Taskbar>
      <CurveLogo />
    </Window>
  );
}
